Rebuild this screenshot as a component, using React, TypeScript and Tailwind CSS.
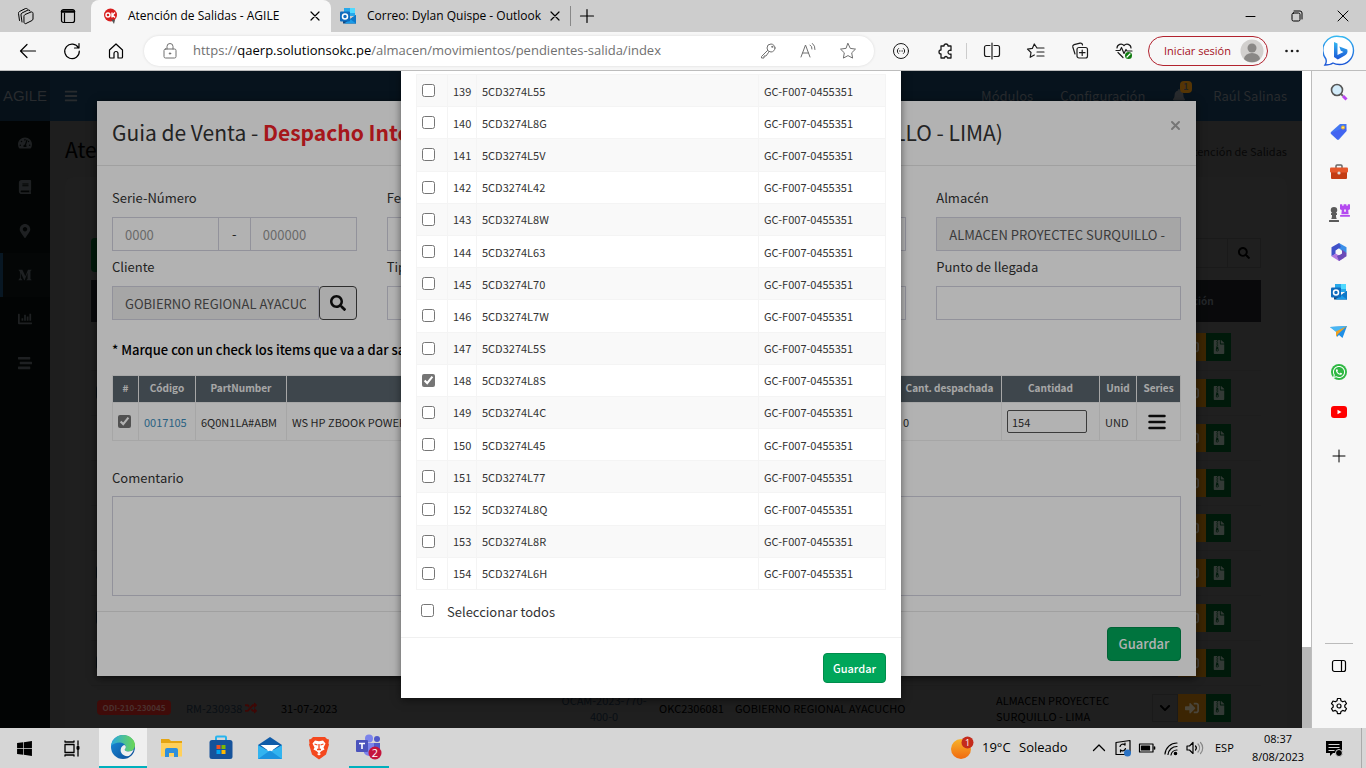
import React from "react";
import {
  FaBars, FaBell, FaBook, FaChartBar, FaChessPawn, FaChessRook, FaChevronDown, FaFileArchive,
  FaMapMarkerAlt, FaMediumM, FaRandom, FaSearch, FaSignInAlt, FaStream, FaTachometerAlt, FaWhatsapp, FaWindows,
} from "react-icons/fa";

type IconProps = { children: React.ReactNode; size?: number; className?: string; box?: string; stroke?: number };

function Icon({ children, size = 20, className = "", box = "0 0 20 20", stroke = 1 }: IconProps) {
  return (
    <svg width={size} height={size} viewBox={box} fill="none" stroke="currentColor" strokeWidth={stroke}
      strokeLinecap="round" strokeLinejoin="round" className={"shrink-0 " + className} aria-hidden="true">
      {children}
    </svg>
  );
}

function OutlookLogo({ size = 18 }: { size?: number }) {
  return (
    <svg width={size} height={size} viewBox="0 0 18 18" aria-hidden="true">
      <path d="M5 1h11v8H5z" fill="#28a8ea" />
      <path d="M11 1h5v5h-5z" fill="#50d9ff" />
      <path d="M5 5h6v5H5z" fill="#0364b8" />
      <path d="M4 8l7 4 6-4v8.500H4z" fill="#14447d" />
      <path d="M17 8v8.500H5l6-4z" fill="#1a9be8" />
      <path d="M11.500 12.200L17 16.500V8z" fill="#0f78c9" />
      <rect x="1" y="4.500" width="10" height="10" rx="1" fill="#0f6cbd" />
      <circle cx="6" cy="9.500" r="2.500" fill="none" stroke="#fff" strokeWidth="1.500" />
    </svg>
  );
}

/* ---------- Browser chrome ---------- */

function TabStrip() {
  return (
    <div className="flex h-8 items-stretch bg-[#cdcdcd]">
      <div className="flex w-[91px] items-center gap-[22px] pl-4">
        <button aria-label="Áreas de trabajo" className="flex">
          <Icon>
            <path d="M3.500 14.500l-1-7a2 2 0 011-2l6-3a2 2 0 012 .500M6 16l-1-7a2 2 0 011-2l6-3a1.500 1.500 0 012 1M8 10a2 2 0 011-1.500l6-2.500a1.500 1.500 0 012 1.500V13a2 2 0 01-1 1.500L10 17.500a1.300 1.300 0 01-2-1z" />
          </Icon>
        </button>
        <button aria-label="Menú de pestañas" className="flex">
          <Icon stroke={1.2}><rect x="3.500" y="3.500" width="13" height="13" rx="2" /><path d="M4 5.500h12" strokeWidth="2.400" /><path d="M6.500 7v9" /></Icon>
        </button>
      </div>
      <div className="flex w-[240px] items-center rounded-t-lg bg-[#f7f7f7] pl-3">
        <svg width="16" height="16" viewBox="0 0 16 16" aria-hidden="true">
          <circle cx="7.500" cy="7" r="6.500" fill="#d81e1e" /><path d="M8 11l3 5 1-4z" fill="#555" />
          <circle cx="5" cy="7" r="2" fill="none" stroke="#fff" strokeWidth="1.400" /><path d="M9 4.500v5M12 4.500L9.500 7 12 9.500" stroke="#fff" strokeWidth="1.400" fill="none" />
        </svg>
        <span className="flex-1 whitespace-nowrap pl-[9px] text-xs">Atención de Salidas - AGILE</span>
        <button aria-label="Cerrar pestaña" className="mr-1.5 flex"><Icon stroke={1.200}><path d="M6 6l8 8M14 6l-8 8" /></Icon></button>
      </div>
      <div className="flex w-[239px] items-center border-r border-transparent pl-2">
        <OutlookLogo />
        <span className="flex-1 whitespace-nowrap pl-[10px] text-xs">Correo: Dylan Quispe - Outlook</span>
        <button aria-label="Cerrar pestaña" className="mr-1 flex"><Icon stroke={1.200}><path d="M6 6l8 8M14 6l-8 8" /></Icon></button>
      </div>
      <div className="my-1.5 w-px bg-[#888]" />
      <button aria-label="Nueva pestaña" className="flex w-8 items-center justify-center"><Icon stroke={1.200}><path d="M10 3.500v13M3.500 10h13" /></Icon></button>
      <div className="flex-1" />
      <button aria-label="Minimizar" className="flex w-[46px] items-center justify-center"><Icon><path d="M5 10.500h9" /></Icon></button>
      <button aria-label="Restaurar" className="flex w-[46px] items-center justify-center"><Icon><rect x="5" y="7" width="8" height="8" rx="1.500" /><path d="M7 5h6a2 2 0 012 2v6" /></Icon></button>
      <button aria-label="Cerrar" className="flex w-[46px] items-center justify-center"><Icon><path d="M5 5l10 10M15 5L5 15" /></Icon></button>
    </div>
  );
}

function Toolbar() {
  return (
    <div className="flex h-[39px] items-center border-b border-[#bdbdbd] bg-[#f7f7f7] pl-[6px]">
      <button aria-label="Atrás" className="flex w-11 justify-center"><Icon stroke={1.200}><path d="M17.500 10h-15M9 3.500L2.500 10 9 16.500" /></Icon></button>
      <button aria-label="Actualizar" className="flex w-11 justify-center"><Icon stroke={1.200}><path d="M16.500 7A7.300 7.300 0 1017.300 10M17 2.500V7h-4.500" /></Icon></button>
      <button aria-label="Inicio" className="flex w-11 justify-center"><Icon stroke={1.200}><path d="M3.500 9L10 3l6.500 6v7a1 1 0 01-1 1H12v-4.500a2 2 0 00-4 0V17H4.500a1 1 0 01-1-1z" /></Icon></button>
      <div className="ml-[6px] flex h-[30px] flex-1 items-center rounded-full bg-white pl-4 pr-4 text-[#707070] shadow-[0_0_3px_rgba(0,0,0,0.12)]">
        <Icon><rect x="4" y="8" width="12" height="9" rx="1.500" /><path d="M7 8V5.500a3 3 0 016 0V8" /><circle cx="10" cy="12.500" r=".7" fill="currentColor" /></Icon>
        <div role="textbox" aria-label="Dirección" className="flex-1 whitespace-nowrap pl-[13px] text-[13px]">
          https://<span className="text-black">qaerp.solutionsokc.pe</span>/almacen/movimientos/pendientes-salida/index
        </div>
        <div className="flex items-center gap-5">
          <Icon><circle cx="13" cy="7" r="4" /><circle cx="14.200" cy="5.800" r=".6" /><path d="M9.500 9.500L3.500 15.500v1.500h2.500v-2h2l2.500-3.500" /></Icon>
          <Icon><path d="M3 16L7.500 4 12 16M4.500 12h6M12 4a4 4 0 012 4M14.500 2.500A7 7 0 0117 8.500" /></Icon>
          <Icon><path d="M10 2.500l2.300 4.900 5.200.7-3.800 3.700.9 5.300L10 14.600l-4.600 2.500.9-5.300L2.500 8.100l5.200-.7z" /></Icon>
        </div>
      </div>
      <div className="flex items-center text-[#1b1b1b]">
        <div className="ml-[5px] flex w-11 justify-center"><Icon><circle cx="10" cy="10" r="7.500" /><path d="M7.500 7.500a3 3 0 000 5M12.500 7.500a3 3 0 010 5" /><path d="M8.500 10h.1M10 10h.1M11.500 10h.1" /></Icon></div>
        <div className="flex w-11 justify-center"><Icon stroke={1.300}><path d="M6 5h3a2 2 0 114 0h3v4.500a2 2 0 100 3.500v4h-3.500a1.500 1.500 0 10-3 0H6v-4a2 2 0 110-4z" /></Icon></div>
        <div className="-ml-px h-4 w-px bg-[#ccc]" />
        <div className="ml-[3px] flex w-11 justify-center"><Icon stroke={1.200}><path d="M10 2v16M8 4.500H4.500a2 2 0 00-2 2v7a2 2 0 002 2H8M12 4.500h3.500a2 2 0 012 2v7a2 2 0 01-2 2H12" /></Icon></div>
        <div className="flex w-11 justify-center"><Icon stroke={1.200}><path d="M11 7L8.300 3 6.300 7.400l-4.800.7 3.500 3.400-.8 4.800L8.300 14M11 7h7M11 11h7M11 15h7" /></Icon></div>
        <div className="flex w-11 justify-center"><Icon stroke={1.200}><rect x="7" y="6.500" width="10.500" height="10.500" rx="2" /><path d="M12.200 9v5.500M9.500 11.700H15M5 13l-2.200-7a2 2 0 011.300-2.400l6-1.500A2 2 0 0112.500 4" /></Icon></div>
        <div className="flex w-11 justify-center">
          <Icon stroke={1.200}><path d="M2 9.500h4l1.500-3 2.500 6 2-4 1 1.500h5M3 7a4 4 0 017-2.500A4 4 0 0117 7M4 11.500l5 5" /><circle cx="14.500" cy="14.500" r="3.500" fill="#0f7b0f" stroke="none" /><path d="M13 16l3-3" stroke="#fff" /></Icon>
        </div>
        <button className="ml-[2px] flex h-[30px] items-center gap-2 whitespace-nowrap rounded-full border border-[#b2232f] pl-3.5 pr-[3px] text-[11px] text-[#a5101c]">
          <span className="w-[69px]">Iniciar sesión</span>
          <svg width="24" height="24" viewBox="0 0 24 24" aria-hidden="true"><circle cx="12" cy="12" r="11.500" fill="#d2d0ce" /><circle cx="12" cy="9" r="4.500" fill="#8a8886" /><path d="M4 20a8 6 0 0116 0 11.500 11.500 0 01-16 0z" fill="#8a8886" /></svg>
        </button>
        <button aria-label="Configuración y más" className="flex w-12 justify-center"><Icon><g fill="currentColor" stroke="none"><circle cx="4.500" cy="10" r="1.300" /><circle cx="10" cy="10" r="1.300" /><circle cx="15.500" cy="10" r="1.300" /></g></Icon></button>
        <div className="flex w-[50px] justify-center pr-1">
          <svg width="32" height="32" viewBox="0 0 32 32" aria-hidden="true">
            <defs><linearGradient id="bing" x1="0" y1="0" x2="0" y2="1"><stop offset="0" stopColor="#35b8f1" /><stop offset="1" stopColor="#1b55d6" /></linearGradient></defs>
            <path d="M16.500 1.500a14 14 0 110 28c-3 0-5-.6-6.500-1.500-2 1.500-5 2-8 2 1.500-2 1.500-4 .9-6A14 14 0 0116.500 1.500z" fill="#fff" stroke="url(#bing)" strokeWidth="1.400" />
            <path d="M11 7l3.500 1.500V20l6-3-2.700-1.200-1.500-4.300 8 3c.8 3-.5 5-2.500 6l-7 4-3.800-2.500z" fill="url(#bing)" />
          </svg>
        </div>
      </div>
    </div>
  );
}

function EdgeSidebar() {
  const slot = "flex h-10 items-center justify-center";
  return (
    <aside className="flex w-[55px] shrink-0 flex-col border-l border-[#bdbdbd] bg-[#f7f7f7] pt-px">
      <div className={slot}>
        <svg width="20" height="20" viewBox="0 0 20 20" aria-hidden="true"><path d="M12 12l2 2" stroke="#666" strokeWidth="2" /><path d="M14 14l3.500 3.500" stroke="#b845f0" strokeWidth="3" /><circle cx="8" cy="8" r="5.500" fill="#d3ecfa" stroke="#555" strokeWidth="1.600" /></svg>
      </div>
      <div className={slot}>
        <svg width="20" height="20" viewBox="0 0 20 20" aria-hidden="true"><path d="M11 2h6.500v7L10 17.500a1.500 1.500 0 01-2 0L2 12a1.500 1.500 0 010-2z" fill="#4477f2" /><path d="M2 11l6.500 6.500L17.500 9 17 5z" fill="#4051f0" opacity=".5" /><circle cx="14" cy="5.500" r="1.500" fill="#ffe27a" stroke="#f5b41d" /></svg>
      </div>
      <div className={slot}>
        <svg width="20" height="20" viewBox="0 0 20 20" aria-hidden="true"><path d="M7 6V4a1 1 0 011-1h4a1 1 0 011 1v2" fill="none" stroke="#666" strokeWidth="1.500" /><rect x="2" y="9" width="16" height="8" rx="1" fill="#c33d14" /><rect x="1" y="5.500" width="18" height="5" rx="1" fill="#e4572b" /><circle cx="10" cy="11" r="1.600" fill="#ddd" /></svg>
      </div>
      <div className={slot}>
        <FaChessPawn className="mt-1 h-4 w-3 shrink-0 text-[#5a5a5a]" /><FaChessRook className="-mt-1 h-3.5 w-2.5 shrink-0 text-[#b44af0]" />
      </div>
      <div className={slot}>
        <svg width="20" height="20" viewBox="0 0 20 20" aria-hidden="true"><path d="M10 1l7.500 4.300v6L13 9 10 6.500z" fill="#3b8fe8" /><path d="M10 1L2.500 5.300v9L6.500 12V8.500L12 5z" fill="#3f51c9" /><path d="M2.500 14.300L10 19l5-3-4.500-2.500-4-2z" fill="#b278e0" /><path d="M17.500 11v3.300L10 19l-2-5 5-2.500V7.500z" fill="#6b4bb8" /><circle cx="10" cy="10" r="2.700" fill="#f7f7f7" /></svg>
      </div>
      <div className={slot}><OutlookLogo /></div>
      <div className={slot}>
        <svg width="20" height="20" viewBox="0 0 20 20" aria-hidden="true"><path d="M1 5l17-1-4.500 12-3.500-3-2 2V10z" fill="#1f8fe6" /><path d="M1 5l17-1L7 10z" fill="#49b6f2" /><path d="M18 4L7 9.500V15l2-3z" fill="#f0a020" /></svg>
      </div>
      <div className={slot}>
        <span className="flex size-4 items-center justify-center rounded-full bg-[#2fb843] text-white"><FaWhatsapp className="size-3.5" /></span>
      </div>
      <div className={slot}>
        <svg width="16" height="12" viewBox="0 0 16 12" aria-hidden="true"><rect width="16" height="12" rx="3" fill="#f00" /><path d="M6.500 3.800v4.400l4-2.200z" fill="#fff" /></svg>
      </div>
      <button aria-label="Agregar" className="mt-1 flex h-10 items-center justify-center"><Icon><path d="M10 4v12M4 10h12" /></Icon></button>
      <div className="mt-auto ml-[13px] h-px w-7 bg-[#bbb]" />
      <div className="flex h-11 items-center justify-center"><Icon stroke={1.200}><rect x="3.500" y="4.500" width="13" height="11" rx="2" /><path d="M12.500 4.500v11" /></Icon></div>
      <div className="flex h-[40px] items-start justify-center pt-2">
        <Icon stroke={1.200}><circle cx="10" cy="10" r="2" /><path d="M8.500 2.500h3l.5 2.300 1.700 1 2.300-.8 1.500 2.600-1.700 1.600v1.800l1.700 1.600-1.500 2.600-2.300-.8-1.700 1-.5 2.300h-3L8 15.400l-1.700-1-2.300.8-1.500-2.600L4.200 11V9.200L2.500 7.600 4 5l2.300.8 1.700-1z" /></Icon>
      </div>
    </aside>
  );
}

/* ---------- Dimmed page behind the dialogs ---------- */

type Order = { tag?: string; red?: boolean; req?: string; date?: string; oc?: string; okc?: string; client?: string; store?: string[] };

const orders: Order[] = [
  {}, { tag: "blue" }, {}, {}, {}, { tag: "blue" }, { tag: "blue" },
  { tag: "blue", store: ["ALMACEN", "LIMA"] },
  {
    tag: "ODI-210-230045", red: true, req: "RM-230938", date: "31-07-2023", oc: "OCAM-2023-770-400-0",
    okc: "OKC2306081", client: "GOBIERNO REGIONAL AYACUCHO", store: ["ALMACEN PROYECTEC", "SURQUILLO - LIMA"],
  },
];

function PageBehind() {
  return (
    <div className="flex h-full flex-col bg-[#2b2b2b] text-black">
      <div className="flex h-[50px] shrink-0 items-center bg-[#0b1c2a] text-[#3a3e42]">
        <div className="flex h-full w-[50px] items-center justify-center bg-[#091723] [font-family:'Liberation_Sans',sans-serif] text-[15px]">AGILE</div>
        <FaBars className="ml-[14px] size-3.5" />
        <div className="ml-auto flex items-center pr-[15px] text-[13px]">
          <span>Módulos</span>
          <span className="ml-[27px]">Configuración</span>
          <span className="relative ml-[27px]"><FaBell className="size-3.5" />
            <span className="absolute -top-2 left-2 rounded-sm bg-[#7a4d08] px-[3px] text-[9px] leading-3 font-bold text-[#333]">1</span>
          </span>
          <span className="ml-[27px]">Raúl Salinas</span>
        </div>
      </div>
      <div className="flex min-h-0 flex-1">
        <nav className="flex w-[50px] shrink-0 flex-col bg-[#040706] text-[#2b2f31]">
          {[FaTachometerAlt, FaBook, FaMapMarkerAlt, FaMediumM, FaChartBar, FaStream].map((Glyph, i) => (
            <a href="#" key={i} className={"flex h-11 items-center border-l-[3px] pl-[15px] " + (i === 3 ? "border-[#0c2233] bg-[#070a0a]" : "border-transparent")}>
              <Glyph className="size-3.5" />
            </a>
          ))}
        </nav>
        <div className="flex min-w-0 flex-1 flex-col overflow-hidden px-[15px] pt-[14px]">
          <div className="flex h-[42px] shrink-0 items-start justify-between">
            <h1 className="text-[21px] leading-7">Atención</h1>
            <span className="pt-2 text-[11px] leading-4 text-[#0c0c0c]">Atención de Salidas</span>
          </div>
          <div className="flex-1 rounded-t-lg bg-[#2d2d2d] px-[26px] pt-[61px]">
            <div className="flex h-[42px] items-start justify-between">
              <div className="h-[34px] w-20 rounded-sm bg-[#00240f]" />
              <div className="flex h-[30px] border border-[#262626]">
                <div className="w-40 border-r border-[#262626]" />
                <div className="flex w-8 items-center justify-center"><FaSearch className="size-3" /></div>
              </div>
            </div>
            <table className="w-full table-fixed border-collapse text-[11px] leading-4">
              <colgroup>
                <col className="w-[86px]" /><col className="w-[86px]" /><col className="w-[94px]" /><col /><col className="w-[100px]" />
                <col className="w-[75px]" /><col className="w-[182px]" /><col className="w-[79px]" /><col className="w-[156px]" /><col className="w-[115px]" />
              </colgroup>
              <thead>
                <tr className="h-[42px] bg-[#0d0e10] text-[10px] text-[#33373b]">
                  <th colSpan={9} /><th className="pr-3">Acción</th>
                </tr>
              </thead>
              <tbody className="before:block before:h-[3px]">
                {orders.map((o, i) => (
                  <tr key={i} className="h-[45px] border-b border-[#2a2a2a]">
                    <td>
                      {o.tag && o.red && <span className="mx-auto block w-[74px] rounded-sm bg-[#5c110d] text-center text-[8px] leading-[15px] font-bold text-[#6b4744]">{o.tag}</span>}
                      {o.tag && !o.red && <span className="mx-auto block h-[15px] w-[76px] rounded-sm bg-[#08131e]" />}
                    </td>
                    <td>{o.req && <span className="flex items-center gap-[3px] pl-[9px] text-[#0d161e]">{o.req}<FaRandom className="size-3 text-[#5a0b08]" /></span>}</td>
                    <td className="pl-[18px]">{o.date}</td>
                    <td />
                    <td className="text-center text-[#0d161e]">{o.oc}</td>
                    <td className="text-center">{o.okc}</td>
                    <td className="whitespace-nowrap pl-1.5">{o.client}</td>
                    <td />
                    <td className="pl-1.5">{o.store?.map((s) => <div key={s}>{s}</div>)}</td>
                    <td>
                      <div className="flex h-7 pl-1.5">
                        <span className="flex w-[26px] items-center justify-center border border-[#262626]"><FaChevronDown className="size-3" /></span>
                        <span className="flex w-7 items-center justify-center bg-[#563605] text-[#6b6354]"><FaSignInAlt className="size-3.5" /></span>
                        <span className="flex w-[25px] items-center justify-center bg-[#00240f] text-[#4a544e]"><FaFileArchive className="size-3.5" /></span>
                      </div>
                    </td>
                  </tr>
                ))}
              </tbody>
            </table>
          </div>
        </div>
      </div>
    </div>
  );
}

/* ---------- "Guia de Venta" dialog ---------- */

const fieldBase = "h-[34px] w-full min-w-0 border border-[#d2d2de] px-3 text-[13px] text-[#555] placeholder:text-[#999]";
const fieldBox = fieldBase + " bg-white";
const fieldLocked = fieldBase + " bg-[#eee]";
const fieldLabel = "block h-[18px] text-[13px] leading-[18px] text-[#333]";

function GuideDialog() {
  return (
    <section aria-label="Guia de Venta" className="w-[85%] bg-white shadow-[0_2px_8px_rgba(0,0,0,0.6)]">
      <header className="flex h-[65px] items-start justify-between border-b border-[#e5e5e5] px-[15px] pt-[14px]">
        <h2 className="flex w-[891px] justify-between whitespace-nowrap text-[21px] leading-[34px] text-[#333]">
          <span>Guia de Venta - <b className="text-[#ee2228]">Despacho Interno</b></span>
          <span>(SURQUILLO - LIMA)</span>
        </h2>
        <button aria-label="Cerrar" className="flex h-5 items-center text-[#aaa]"><Icon size={11} box="0 0 11 11" stroke={2}><path d="M2 2l7 7M9 2L2 9" /></Icon></button>
      </header>
      <div className="px-[15px] pt-[23px]">
        <div className="grid grid-cols-4 gap-x-[30px] gap-y-[7px]">
          <div>
            <label htmlFor="serie" className={fieldLabel}>Serie-Número</label>
            <div className="mt-[10px] flex">
              <input id="serie" placeholder="0000" className={fieldBox} />
              <span className="flex w-[31px] shrink-0 items-center justify-center border-y border-[#d2d2de] text-[13px] text-[#333]">-</span>
              <input aria-label="Número" placeholder="000000" className={fieldBox} />
            </div>
          </div>
          <div>
            <label htmlFor="fecha" className={fieldLabel}>Fecha</label>
            <input id="fecha" className={fieldBox + " mt-[10px]"} />
          </div>
          <div className="pt-7"><input aria-label="Fecha de almacén" className={fieldBox} /></div>
          <div>
            <label htmlFor="almacen" className={fieldLabel}>Almacén</label>
            <input id="almacen" readOnly defaultValue="ALMACEN PROYECTEC SURQUILLO - LIMA" className={fieldLocked + " mt-[10px]"} />
          </div>
          <div>
            <label htmlFor="cliente" className={fieldLabel}>Cliente</label>
            <div className="mt-[10px] flex">
              <input id="cliente" readOnly defaultValue="GOBIERNO REGIONAL AYACUCHO" className={fieldLocked} />
              <button aria-label="Buscar cliente" className="flex w-[38px] shrink-0 items-center justify-center rounded-sm border border-[#444] bg-[#f4f4f4] text-[#111]"><FaSearch className="size-4" /></button>
            </div>
          </div>
          <div>
            <label htmlFor="tipo" className={fieldLabel}>Tipo</label>
            <input id="tipo" className={fieldBox + " mt-[10px]"} />
          </div>
          <div className="pt-7"><input aria-label="Punto de partida" className={fieldBox} /></div>
          <div>
            <label htmlFor="llegada" className={fieldLabel}>Punto de llegada</label>
            <input id="llegada" className={fieldBox + " mt-[10px]"} />
          </div>
        </div>
        <p className="mt-5 text-[13px] leading-5 font-medium text-black">* Marque con un check los items que va a dar salida</p>
        <table className="mt-[15px] w-full table-fixed border-collapse text-[11px] leading-4 text-[#333]">
          <colgroup>
            <col className="w-[26px]" /><col className="w-[57px]" /><col className="w-[91px]" /><col /><col className="w-[104px]" />
            <col className="w-[98px]" /><col className="w-[37px]" /><col className="w-[44px]" />
          </colgroup>
          <thead>
            <tr className="h-[27px] bg-[#5a656e] text-[10px] text-[#f0f0f0] [&>th]:border [&>th]:border-[#f0f0f0] [&>th]:pb-0.5 [&>th]:font-bold">
              <th>#</th><th>Código</th><th>PartNumber</th><th /><th>Cant. despachada</th><th>Cantidad</th><th>Unid</th><th>Series</th>
            </tr>
          </thead>
          <tbody>
            <tr className="h-[38px] [&>td]:border [&>td]:border-[#eee] [&>td]:px-[5px]">
              <td><input type="checkbox" aria-label="Seleccionar 0017105" defaultChecked className="block size-[13px] accent-[#757575]" /></td>
              <td><a href="#" className="text-[#3c8dbc]">0017105</a></td>
              <td>6Q0N1LA#ABM</td>
              <td className="whitespace-nowrap">WS HP ZBOOK POWER</td>
              <td>0</td>
              <td><input aria-label="Cantidad" defaultValue="154" className="block h-[23px] w-20 rounded-xs border border-[#555] px-1" /></td>
              <td>UND</td>
              <td>
                <button aria-label="Series" className="ml-1.5 flex text-[#111]">
                  <Icon size={18} box="0 0 18 18" stroke={2.5}><path d="M1.500 3h15M1.500 9h15M1.500 15h15" /></Icon>
                </button>
              </td>
            </tr>
          </tbody>
        </table>
        <label htmlFor="comentario" className={fieldLabel + " mt-7"}>Comentario</label>
        <textarea id="comentario" className="mt-[9px] block h-[100px] w-full resize-none border border-[#d2d2de]" />
      </div>
      <footer className="mt-[15px] flex justify-end border-t border-[#e5e5e5] p-[15px]">
        <button className="h-[34px] w-[74px] rounded-sm border border-[#008d4c] bg-[#00a65a] text-[13px] font-medium text-white">Guardar</button>
      </footer>
    </section>
  );
}

/* ---------- Serial numbers dialog ---------- */

const serials = ["L55", "L8G", "L5V", "L42", "L8W", "L63", "L70", "L7W", "L5S", "L8S", "L4C", "L45", "L77", "L8Q", "L8R", "L6H"];

function SeriesDialog() {
  return (
    <section aria-label="Series" className="w-[500px] bg-white shadow-[0_2px_8px_rgba(0,0,0,0.5)]">
      <div className="px-[15px] pt-[3px]">
        <table className="h-[516px] w-full table-fixed border-collapse text-[11px] leading-4 text-[#333]">
          <colgroup><col className="w-[31px]" /><col className="w-[29px]" /><col /><col className="w-[127px]" /></colgroup>
          <tbody>
            {serials.map((s, i) => (
              <tr key={s} className="odd:bg-[#f9f9f9] [&>td]:border [&>td]:border-[#f4f4f4] [&>td]:px-[5px]">
                <td><input type="checkbox" aria-label={"Serie 5CD3274" + s} defaultChecked={s === "L8S"} className="block size-[13px] accent-[#757575]" /></td>
                <td>{139 + i}</td>
                <td>{"5CD3274" + s}</td>
                <td>GC-F007-0455351</td>
              </tr>
            ))}
          </tbody>
        </table>
        <div className="flex h-[47px] items-start pl-[5px] pt-[13px]">
          <input id="todos" type="checkbox" className="mr-[13px] mt-px size-[13px] accent-[#757575]" />
          <label htmlFor="todos" className="text-[13px] leading-[18px] text-[#333]">Seleccionar todos</label>
        </div>
      </div>
      <footer className="flex justify-end border-t border-[#f0f0f0] p-[15px]">
        <button className="h-[30px] w-[63px] rounded-sm border border-[#008d4c] bg-[#00a65a] text-[11px] font-medium text-white">Guardar</button>
      </footer>
    </section>
  );
}

/* ---------- Windows taskbar ---------- */

function Taskbar() {
  const slot = "flex h-full w-[49px] items-center justify-center";
  return (
    <div className="flex h-10 shrink-0 items-center bg-[#d6d6d6] text-black">
      <button aria-label="Inicio" className="flex h-full w-12 items-center justify-center"><FaWindows className="size-[17px]" /></button>
      <button aria-label="Vista de tareas" className="flex h-full w-[51px] items-center justify-center pr-[3px]">
        <Icon stroke={1.300}><rect x="3" y="6.500" width="9" height="8" /><path d="M3 3v1h9V3M3 18v-1h9v1M16 3v4M16 12v6" /><path d="M16 9v1.500" strokeWidth="3" /></Icon>
      </button>
      <button aria-label="Microsoft Edge" className="flex h-full w-12 items-center justify-center border-b-2 border-[#00b0bd] bg-[#efefef]">
        <svg width="24" height="24" viewBox="0 0 24 24" aria-hidden="true">
          <defs>
            <linearGradient id="edgeTop" x1="0" x2="1" y1="0" y2="0"><stop offset="0" stopColor="#2aa8e0" /><stop offset="1" stopColor="#6bd752" /></linearGradient>
            <linearGradient id="edgeLow" x1="0" x2="1" y1="0" y2="1"><stop offset="0" stopColor="#1b8fdd" /><stop offset="1" stopColor="#0b4a95" /></linearGradient>
          </defs>
          <circle cx="12" cy="12" r="12" fill="url(#edgeLow)" />
          <path d="M0 11C1 4 6 0 12 0c7 0 12 5 12 10 0 4-3 6.500-6.500 6.500-3 0-4.500-1.500-3.500-2.500 2-2.500-.5-6.500-5-6.500-4 0-7 1.500-9 3.500z" fill="url(#edgeTop)" />
          <path d="M14 14c-1 1 .5 2.500 3.500 2.500 2 0 4-.8 5.300-2.200-.8 2.800-2.600 5.200-5 6.700-5 1-9-3-8-7 .4-2 1.800-3.500 3.500-4 1.800.8 2 2.700.7 4z" fill="#efefef" />
        </svg>
      </button>
      <div className={slot}>
        <svg width="24" height="22" viewBox="0 0 24 22" aria-hidden="true"><path d="M1 2h8l2 2h11v15H1z" fill="#e5a512" /><path d="M1 6h21v13.500H1z" fill="#ffd05a" /><path d="M5 20v-7a2 2 0 012-2h9a2 2 0 012 2v7h-4v-4H9v4z" fill="#2f8fdb" /></svg>
      </div>
      <div className={slot}>
        <svg width="24" height="26" viewBox="0 0 24 26" aria-hidden="true"><path d="M7 6V2.500a1 1 0 011-1h8a1 1 0 011 1V6" fill="none" stroke="#27b4ee" strokeWidth="2" /><rect x=".500" y="5" width="23" height="19" rx="2.500" fill="#16539b" /><path d="M7.500 10h4v4h-4z" fill="#f25022" /><path d="M12.500 10h4v4h-4z" fill="#7fba00" /><path d="M7.500 15h4v4h-4z" fill="#00a4ef" /><path d="M12.500 15h4v4h-4z" fill="#ffb900" /></svg>
      </div>
      <div className={slot}>
        <svg width="26" height="24" viewBox="0 0 26 24" aria-hidden="true"><path d="M1 9l12-8 12 8v5H1z" fill="#0f5ba8" /><path d="M3.500 9h19L13 16z" fill="#fff" /><path d="M1 9l12 7 12-7v14H1z" fill="#32b4f0" /><path d="M1 23l12-8.500L25 23z" fill="#1c93de" /></svg>
      </div>
      <div className={slot}>
        <svg width="22" height="24" viewBox="0 0 22 24" aria-hidden="true"><path d="M5 1h12l2 2 2 .500-.5 4 .5 1-3 10-7 5-7-5L1 8.500l.5-1-.5-4L3 3z" fill="#f4481e" /><path d="M7 4.500l4 .800 4-.800 2.500 3-2 4 1 2-3 1.500L11 17.500 8.500 15l-3-1.500 1-2-2-4z" fill="#fff" /><path d="M6.500 8l3 1M15.500 8l-3 1M11 8v5M9 13.500h4" stroke="#f4481e" strokeWidth="1.300" /><path d="M9 18l2-1 2 1-2 1.500z" fill="#fff" /></svg>
      </div>
      <button aria-label="Microsoft Teams" className="ml-1.5 flex h-full w-10 items-center justify-center border-b-2 border-[#00b0bd]">
        <svg width="28" height="26" viewBox="0 0 28 26" aria-hidden="true"><circle cx="14" cy="4.500" r="4" fill="#7b83eb" /><circle cx="22" cy="5" r="3" fill="#5059c9" /><path d="M9 9h11v8a6 6 0 01-11 2z" fill="#7b83eb" /><path d="M19 9h6v8h-6z" fill="#5059c9" /><rect x="1" y="6" width="12" height="12" rx="1" fill="#4b53bc" /><path d="M4 9.500h6M7 9.500V15" stroke="#fff" strokeWidth="1.600" /><circle cx="20" cy="19" r="6.500" fill="#c4143c" /><text x="20" y="23" fontSize="11" textAnchor="middle" fill="#fff">2</text></svg>
      </button>
      <div className="ml-auto flex h-full items-center">
        <svg width="24" height="24" viewBox="0 0 24 24" aria-hidden="true">
          <defs><linearGradient id="sun" x1="0" y1="0" x2="0" y2="1"><stop offset="0" stopColor="#f7b32b" /><stop offset="1" stopColor="#f0690f" /></linearGradient></defs>
          <circle cx="11" cy="13" r="10" fill="url(#sun)" /><circle cx="17.500" cy="6.500" r="6" fill="#c42b1c" /><text x="17.500" y="10" fontSize="9" textAnchor="middle" fill="#fff">1</text>
        </svg>
        <span className="ml-2 w-[37px] whitespace-nowrap text-[13px]">19°C</span>
        <span className="w-[70px] whitespace-nowrap text-[13px]">Soleado</span>
        <Icon><path d="M4.500 12.500L10 7l5.500 5.500" stroke="#000" strokeWidth="1.300" /></Icon>
        <Icon className="ml-1" stroke={1.200}><path d="M3 4.500L17 2.500v12M3 4.500v12h9M7 8.500a3 3 0 015-1.500V5M12.500 10.500a3 3 0 01-5 1.500v2" /><circle cx="14.500" cy="15" r="3.500" fill="#2a72c4" stroke="none" /></Icon>
        <Icon className="ml-1" stroke={1.200}><rect x="2.500" y="6" width="13.500" height="8" /><path d="M4.500 8h8v4h-8z" fill="currentColor" /><path d="M17.500 9v2" strokeWidth="1.600" /></Icon>
        <Icon className="ml-1" stroke={1.200}><path d="M4 16A12 12 0 0116 5M7 16.500A9 9 0 0116 8.500M10 17a6 6 0 016-5" /><circle cx="14.500" cy="15.500" r="1.200" fill="currentColor" /></Icon>
        <Icon className="ml-1" stroke={1.200}><path d="M2 8h2.500L8 4.500v11L4.500 12H2zM10.500 8a3 3 0 010 4" /><path d="M13 6a6 6 0 010 8M15.500 4.500a8 8 0 010 11" stroke="#888" /></Icon>
        <span className="ml-[10px] w-[33px] text-[11px]">ESP</span>
        <div className="w-[60px] text-center text-[11px] leading-[18px]"><div>08:37</div><div>8/08/2023</div></div>
        <button aria-label="Notificaciones" className="ml-4 mr-[17px] flex">
          <Icon><path d="M2 3h16v12H9l-3 3v-3H2z" fill="#000" stroke="none" /><path d="M4.500 6.500h11M4.500 9.500h11M4.500 12.500h6" stroke="#d6d6d6" strokeLinecap="butt" /><circle cx="15" cy="15" r="3.500" fill="#000" stroke="#d6d6d6" /></Icon>
        </button>
        <div className="mr-1 h-full w-px bg-[#aaa]" />
      </div>
    </div>
  );
}

export default function App() {
  return (
    <div className="flex h-screen flex-col overflow-hidden [font-family:'Open_Sans',sans-serif] text-black">
      <TabStrip />
      <Toolbar />
      <div className="flex min-h-0 flex-1">
        <main className="relative min-w-0 flex-1 overflow-hidden [font-family:'Noto_Sans_CJK_SC','Open_Sans',sans-serif]">
          <PageBehind />
          <div className="absolute inset-0 flex items-start justify-center pr-[9px] pt-[30px]"><GuideDialog /></div>
          <div className="absolute inset-0 flex items-start justify-center bg-black/30"><SeriesDialog /></div>
        </main>
        <div className="flex w-[9px] shrink-0 flex-col justify-end bg-white"><div className="h-[81px] bg-[#b8b8b8]" /></div>
        <EdgeSidebar />
      </div>
      <Taskbar />
    </div>
  );
}
